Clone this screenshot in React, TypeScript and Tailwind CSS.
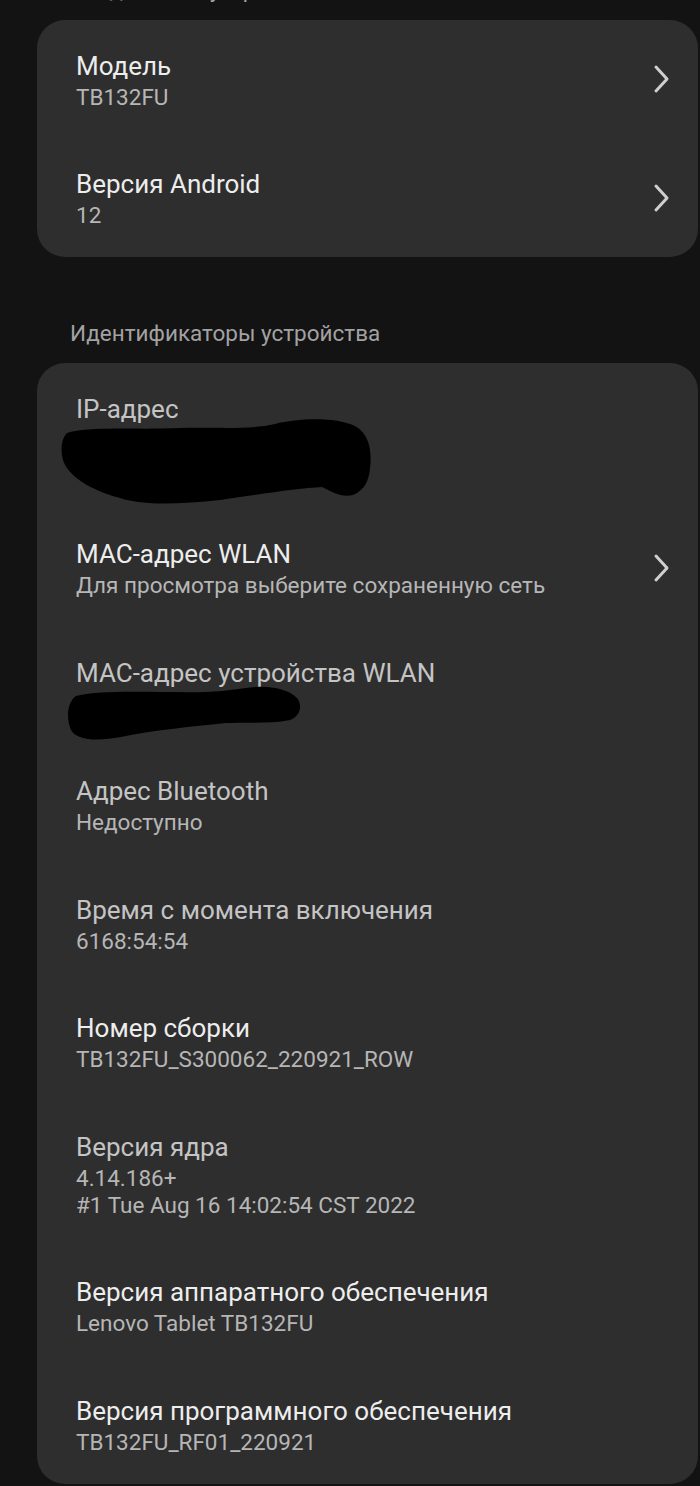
import React from "react";

type Row = {
	title: string;
	lines?: string[];
	dim?: boolean;
	chevron?: boolean;
	blob?: "ip" | "mac";
};

const modelRows: Row[] = [
	{ title: "Модель", lines: ["TB132FU"], chevron: true },
	{ title: "Версия Android", lines: ["12"], chevron: true },
];

const idRows: Row[] = [
	{ title: "IP-адрес", lines: ["", ""], dim: true, blob: "ip" },
	{
		title: "MAC-адрес WLAN",
		lines: ["Для просмотра выберите сохраненную сеть"],
		chevron: true,
	},
	{ title: "MAC-адрес устройства WLAN", lines: [""], dim: true, blob: "mac" },
	{ title: "Адрес Bluetooth", lines: ["Недоступно"], dim: true },
	{ title: "Время с момента включения", lines: ["6168:54:54"], dim: true },
	{ title: "Номер сборки", lines: ["TB132FU_S300062_220921_ROW"] },
	{
		title: "Версия ядра",
		lines: ["4.14.186+", "#1 Tue Aug 16 14:02:54 CST 2022"],
		dim: true,
	},
	{ title: "Версия аппаратного обеспечения", lines: ["Lenovo Tablet TB132FU"] },
	{ title: "Версия программного обеспечения", lines: ["TB132FU_RF01_220921"] },
];

const Chevron = () => (
	<svg width="18" height="32" viewBox="0 0 18 32" className="shrink-0">
		<polyline
			points="4,4 15,16 4,28"
			fill="none"
			stroke="#cfcfcf"
			strokeWidth="3"
			strokeLinecap="round"
			strokeLinejoin="round"
		/>
	</svg>
);

// scribbled-over values, drawn as ink blobs
const IpBlob = () => (
	<svg
		width="312"
		height="90"
		viewBox="0 0 312 90"
		className="absolute left-[-16px] top-[-9px]"
	>
		<path
			d="M7 15 C 30 8, 80 12, 120 10 C 160 9, 190 12, 215 6 C 240 0, 275 -1, 295 8 C 310 16, 312 35, 310 50 C 309 62, 305 72, 293 77 C 282 80, 272 74, 262 69 C 240 70, 200 76, 160 82 C 120 86, 85 88, 60 80 C 30 72, 8 58, 3 42 C 0 30, 2 20, 7 15 Z"
			fill="#000"
		/>
	</svg>
);

const MacBlob = () => (
	<svg
		width="236"
		height="60"
		viewBox="0 0 236 60"
		className="absolute left-[-10px] top-[-7px]"
	>
		<path
			d="M10 12 C 40 5, 90 9, 140 8 C 165 7, 175 4, 190 3 C 205 2, 222 5, 231 14 C 237 22, 234 32, 224 36 C 205 40, 185 38, 160 39 C 130 42, 90 46, 60 52 C 35 57, 12 58, 5 46 C 0 35, 1 18, 10 12 Z"
			fill="#000"
		/>
	</svg>
);

const InfoRow = ({ row }: { row: Row }) => (
	<div className="flex items-center py-[27.75px] pl-[39px] pr-[28px]">
		<div className="flex flex-col flex-1 min-w-0">
			<span
				className={`text-[26px] leading-[36px] ${
					row.dim ? "text-[#c4c4c4]" : "text-[#ededed]"
				}`}
			>
				{row.title}
			</span>
			<div className="relative flex flex-col">
				{row.blob === "ip" && <IpBlob />}
				{row.blob === "mac" && <MacBlob />}
				{row.lines?.map((line, i) => (
					<span
						key={i}
						className="text-[22.5px] leading-[27px] h-[27px] text-[#b6b6b6]"
					>
						{line}
					</span>
				))}
			</div>
		</div>
		{row.chevron && <Chevron />}
	</div>
);

const SectionHeader = ({
	text,
	className,
}: {
	text: string;
	className: string;
}) => (
	<div
		className={`pl-[70px] text-[22.5px] leading-[30px] text-[#a2a2a2] whitespace-nowrap ${className}`}
	>
		{text}
	</div>
);

const Card = ({ rows }: { rows: Row[] }) => (
	<div className="ml-[37px] mr-[2px] rounded-[28px] bg-[#2e2e2e] flex flex-col">
		{rows.map((row) => (
			<InfoRow key={row.title} row={row} />
		))}
	</div>
);

export default function App() {
	return (
		<div
			className="w-[700px] h-[1486px] overflow-hidden bg-[#131313]"
			style={{ fontFamily: "Roboto, 'Noto Sans', sans-serif" }}
		>
			<SectionHeader
				text="Сведения об устройстве"
				className="-mt-[26px] mb-[16px]"
			/>
			<Card rows={modelRows} />
			<SectionHeader
				text="Идентификаторы устройства"
				className="mt-[61px] mb-[15px]"
			/>
			<Card rows={idRows} />
		</div>
	);
}
